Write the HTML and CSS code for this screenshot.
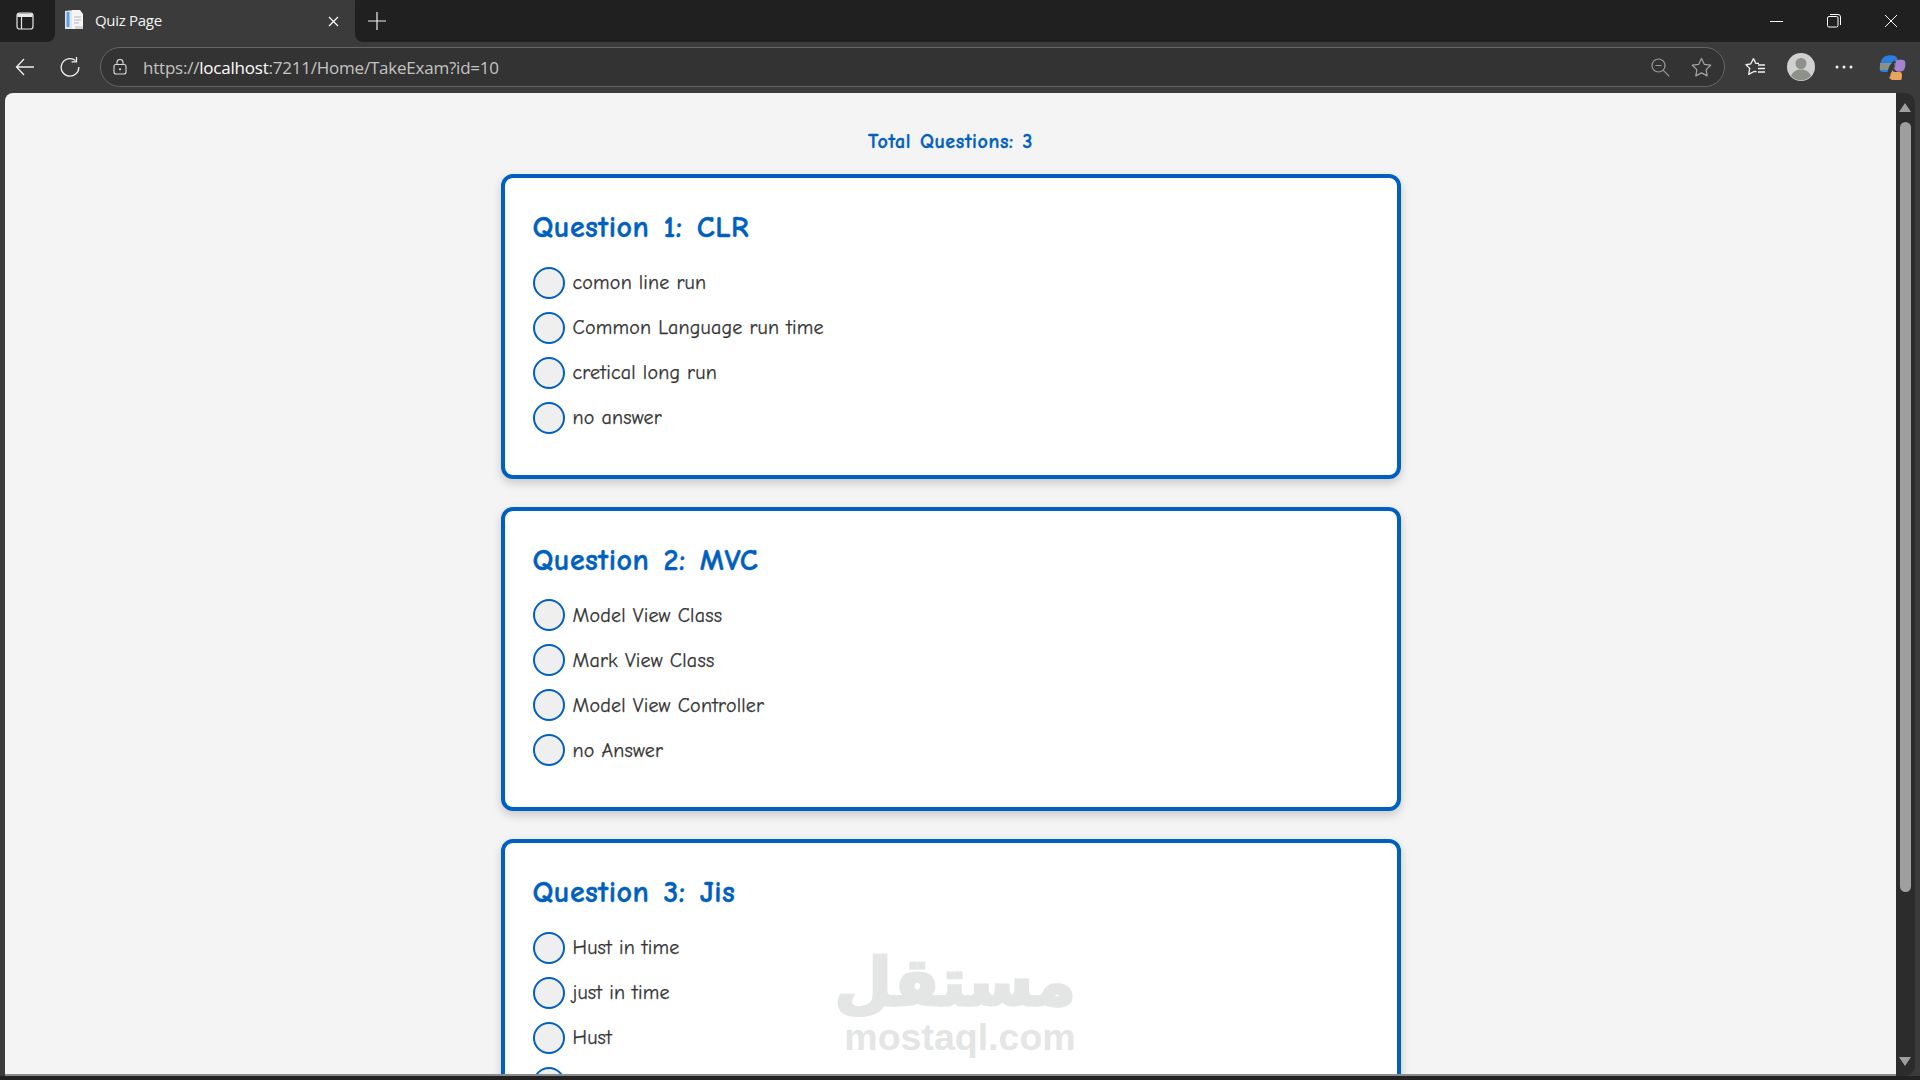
FILE: index.html
```html
<!DOCTYPE html>
<html lang="en">
<head>
<meta charset="utf-8">
<title>Quiz Page</title>
<link rel="stylesheet" href="styles.css">
</head>
<body>
<div class="browser">
  <header class="tabstrip">
    <div class="strip-left">
      <svg class="ico-side" width="18" height="18" viewBox="0 0 18 18"><rect x="1" y="1" width="16" height="16" rx="2.500" fill="none" stroke="#e8e8e8" stroke-width="1.200"/><path d="M1.500 1.500h15v3.500h-15z" fill="#e8e8e8"/><path d="M5.500 5v12" stroke="#e8e8e8" stroke-width="1.200"/></svg>
    </div>
    <div class="tab">
      <svg class="favicon" width="20" height="21" viewBox="0 0 20 21"><path d="M1 2l9-1v19H1z" fill="#dfe6ee"/><path d="M2.500 3h3v15h-3z" fill="#5a9fe0"/><path d="M8 1h8l3 4v15H8z" fill="#f4f4f4"/><path d="M10 8h7M10 11h7M10 14h5" stroke="#b9b9b9" stroke-width="1"/><path d="M11 17h8v3h-8z" fill="#d5d5d5"/></svg>
      <span class="tab-title">Quiz Page</span>
      <svg class="tab-close" width="11" height="11" viewBox="0 0 11 11"><path d="M1 1l9 9M10 1l-9 9" stroke="#fff" stroke-width="1.200"/></svg>
    </div>
    <div class="strip-right">
      <svg class="ico-new" width="18" height="18" viewBox="0 0 18 18"><path d="M9 0v18M0 9h18" stroke="#f0f0f0" stroke-width="1.200"/></svg>
      <div class="window-controls">
        <svg width="14" height="14" viewBox="0 0 14 14"><path d="M0 7.500h13" stroke="#fff" stroke-width="1"/></svg>
        <svg width="14" height="14" viewBox="0 0 14 14"><rect x=".5" y="2.500" width="10.500" height="10.500" rx="1.500" fill="none" stroke="#fff"/><path d="M3 .5h8a2.500 2.500 0 0 1 2.500 2.500v8" fill="none" stroke="#fff"/></svg>
        <svg width="14" height="14" viewBox="0 0 14 14"><path d="M1 1l12 12M13 1L1 13" stroke="#fff" stroke-width="1"/></svg>
      </div>
    </div>
  </header>

  <nav class="toolbar">
    <svg class="tool-back" width="20" height="18" viewBox="0 0 20 18"><path d="M9 1L1.500 9 9 17M1.500 9H19" fill="none" stroke="#f0f0f0" stroke-width="1.300"/></svg>
    <svg class="tool-reload" width="20" height="20" viewBox="0 0 20 20"><path d="M15.500 3.500A8.800 8.800 0 1 0 18.800 10" fill="none" stroke="#f0f0f0" stroke-width="1.300"/><path d="M11.500 4.800h5V0" fill="none" stroke="#f0f0f0" stroke-width="1.300"/></svg>
    <div class="address">
      <svg width="14" height="16" viewBox="0 0 14 16"><rect x="1" y="5.500" width="12" height="9.500" rx="2" fill="none" stroke="#dcdcdc" stroke-width="1.100"/><path d="M4 5.500V3.500a3 3 0 0 1 6 0v2" fill="none" stroke="#dcdcdc" stroke-width="1.100"/><circle cx="7" cy="10.300" r="1.100" fill="#dcdcdc"/></svg>
      <span class="url"><span class="url-dim">https://</span>localhost<span class="url-dim">:7211/Home/TakeExam?id=10</span></span>
      <div class="address-end">
        <svg width="19" height="19" viewBox="0 0 19 19"><circle cx="7.500" cy="7.500" r="6.500" fill="none" stroke="#9a9a9a" stroke-width="1.200"/><path d="M4.500 7.500h6M12.300 12.300l6 6" stroke="#9a9a9a" stroke-width="1.200"/></svg>
        <svg width="21" height="20" viewBox="0 0 21 20"><path d="M10.500 1.500l2.800 5.800 6.400.9-4.600 4.400 1.100 6.300-5.700-3-5.700 3 1.100-6.300L1.300 8.200l6.400-.9z" fill="none" stroke="#a5a5a5" stroke-width="1.200" stroke-linejoin="round"/></svg>
      </div>
    </div>
    <div class="tool-right">
      <svg class="tool-fav" width="21" height="20" viewBox="0 0 21 20"><path d="M8.500 1.500l2.200 4.800H14M5.700 7L1 7.700l3.700 3.700-1 6 4.800-2.700 3-.2M5.700 7l2.800-5.500" fill="none" stroke="#f2f2f2" stroke-width="1.300" stroke-linejoin="round"/><path d="M13 8h7M13 11.500h7M13 15h7" stroke="#f2f2f2" stroke-width="1.300"/></svg>
      <svg class="tool-avatar" width="28" height="28" viewBox="0 0 28 28"><circle cx="14" cy="14" r="14" fill="#cfd0cf"/><circle cx="14" cy="10.500" r="5.500" fill="#8d9187"/><path d="M4 23c2-5 6-6.500 10-6.500S22 18 24 23a14 14 0 0 1-20 0z" fill="#8d9187"/></svg>
      <svg class="tool-more" width="18" height="4" viewBox="0 0 18 4"><circle cx="2" cy="2" r="1.500" fill="#f2f2f2"/><circle cx="9" cy="2" r="1.500" fill="#f2f2f2"/><circle cx="16" cy="2" r="1.500" fill="#f2f2f2"/></svg>
      <svg class="tool-copilot" width="28" height="27" viewBox="0 0 28 27"><path d="M2 17C1 12 3 5 6 3c3-2 8-2 11-1 2 1 3 4 3 5l-6 1-3 10H6c-2 0-3-.5-4-1z" fill="#2b7de0"/><path d="M2 9h16l-2 3-3 1-2 3H2z" fill="#8a8f8a"/><path d="M1 16h9l1-3 2 4c0 4-1 6-2 7l3 2h9c1-1 1-4 1-5 0-2-1-3-2-3h-6c-2-1-2-3 0-5l-4 8-1-5H1z" fill="#e8a55e"/><path d="M18 7c3-2 8-1 9 0 1 3 0 7-1 9-2 2-6 2-8 1-2-2-2-3-1-5z" fill="#a683cf"/><path d="M17 6l-1 6-4 9-2-1c-1-4 1-6 2-9z" fill="#33383b"/></svg>
    </div>
  </nav>

  <div class="content-row">
    <main class="viewport">
      <p class="total">Total Questions: 3</p>

      <section class="card">
        <h2 class="question">Question 1: CLR</h2>
        <label class="option"><input class="radio" type="radio" name="q1"><span>comon line run</span></label>
        <label class="option"><input class="radio" type="radio" name="q1"><span>Common Language run time</span></label>
        <label class="option"><input class="radio" type="radio" name="q1"><span>cretical long run</span></label>
        <label class="option"><input class="radio" type="radio" name="q1"><span>no answer</span></label>
      </section>

      <section class="card">
        <h2 class="question">Question 2: MVC</h2>
        <label class="option"><input class="radio" type="radio" name="q2"><span>Model View Class</span></label>
        <label class="option"><input class="radio" type="radio" name="q2"><span>Mark View Class</span></label>
        <label class="option"><input class="radio" type="radio" name="q2"><span>Model View Controller</span></label>
        <label class="option"><input class="radio" type="radio" name="q2"><span>no Answer</span></label>
      </section>

      <section class="card">
        <h2 class="question">Question 3: Jis</h2>
        <label class="option"><input class="radio" type="radio" name="q3"><span>Hust in time</span></label>
        <label class="option"><input class="radio" type="radio" name="q3"><span>just in time</span></label>
        <label class="option"><input class="radio" type="radio" name="q3"><span>Hust</span></label>
        <label class="option"><input class="radio" type="radio" name="q3"><span>All</span></label>
      </section>

      <div class="watermark">
        <div class="wm-ar" lang="ar" dir="rtl">مستقل</div>
        <div class="wm-en">mostaql.com</div>
      </div>
    </main>
    <aside class="scrollbar">
      <span class="arrow-up"></span>
      <span class="thumb"></span>
      <span class="arrow-down"></span>
    </aside>
  </div>
</div>
</body>
</html>
```

FILE: styles.css
```css
* { box-sizing: border-box; }
html, body { margin: 0; height: 100%; overflow: hidden; }
body { background: #202020; font-family: "Noto Sans", sans-serif; }

.browser { width: 1920px; height: 1080px; display: flex; flex-direction: column; background: #3b3b3b; border-bottom: 4px solid #222; }

/* Tab strip */
.tabstrip { height: 42px; display: flex; flex: none; background: #3b3b3b; }
.strip-left { width: 55px; background: #202020; border-bottom-right-radius: 8px; display: flex; align-items: center; padding-left: 16px; }
.tab { width: 300px; background: #3b3b3b; border-radius: 9px 9px 0 0; display: flex; align-items: center; padding: 0 10px 0 9px; }
.favicon { margin-top: -3px; }
.tab-title { margin-left: 11px; margin-top: -3px; color: #f4f4f4; font: 15px "Open Sans", sans-serif; letter-spacing: -.3px; }
.tab-close { margin-left: auto; margin-right: 6px; margin-top: 1px; }
.strip-right { flex: 1; background: #202020; border-bottom-left-radius: 8px; display: flex; align-items: center; padding-left: 13px; }
.window-controls { margin-left: auto; margin-right: 22px; display: flex; gap: 43px; }

/* Toolbar */
.toolbar { height: 51px; flex: none; display: flex; align-items: center; padding: 0 0 1px 15px; }
.tool-reload { margin-left: 25px; }
.address { margin-left: 20px; width: 1625px; height: 40px; border: 1px solid #666; border-radius: 20px; background: #333; display: flex; align-items: center; padding: 0 12px 0 12px; }
.url { margin-left: 16px; color: #fff; font: 17px "Open Sans", sans-serif; letter-spacing: -.22px; }
.url-dim { color: #c4c4c4; }
.address-end { margin-left: auto; display: flex; align-items: center; gap: 21px; }
.tool-right { display: flex; align-items: center; margin-left: 20px; }
.tool-avatar { margin-left: 21px; }
.tool-more { margin-left: 20px; }
.tool-copilot { margin-left: 25px; }

/* Content */
.content-row { flex: 1; min-height: 0; display: flex; padding: 0 5px; }
.viewport { position: relative; width: 1891px; background: #f4f4f4; border-radius: 8px 0 0 0; overflow: hidden; border-bottom: 2px solid #8a8a8a; font-family: "Comic Sans MS", "Comic Neue", cursive; }
.total { margin: 37px 0 20px; text-align: center; color: #0060c0; font-size: 20px; line-height: 24px; font-weight: 700; letter-spacing: .6px; word-spacing: 1px; -webkit-text-stroke: .3px #0060c0; }

.card { width: 900px; height: 304.500px; margin: 0 auto 28px; padding: 29px 28px 0; background: #fff; border: 4px solid #0060c0; border-radius: 12px; box-shadow: 0 4px 10px rgba(0, 0, 0, .18); }
.question { margin: 0 0 11px; height: 42px; color: #0060c0; font-size: 30px; line-height: 42px; font-weight: 700; letter-spacing: .5px; word-spacing: 3px; -webkit-text-stroke: .4px #0060c0; }
.option { height: 45px; display: flex; align-items: center; gap: 8px; color: #333; font-size: 20px; letter-spacing: .2px; -webkit-text-stroke: .25px #333; }
.radio { appearance: none; flex: none; width: 32px; height: 32px; margin: 0; background: #efefef; border: 2px solid #0060c0; border-radius: 50%; }

.watermark { position: absolute; left: 839px; top: 856px; width: 232px; text-align: center; pointer-events: none; }
.wm-ar { height: 68px; color: #e4e5e5; font: 700 66px/68px "DejaVu Sans", sans-serif; -webkit-text-stroke: 3px #e4e5e5; }
.wm-en { color: #e4e5e5; font: 700 37.500px/40px "Liberation Sans", sans-serif; }

/* Scrollbar */
.scrollbar { position: relative; width: 19px; background: #2c2c2c; border-radius: 0 10px 10px 0; }
.thumb { position: absolute; left: 4px; top: 29px; width: 11px; height: 770px; background: #9f9f9f; border-radius: 6px; }
.arrow-up, .arrow-down { position: absolute; left: 3px; width: 0; height: 0; border-left: 6.500px solid transparent; border-right: 6.500px solid transparent; }
.arrow-up { top: 10px; border-bottom: 9px solid #9f9f9f; }
.arrow-down { bottom: 10px; border-top: 9px solid #9f9f9f; }
```
